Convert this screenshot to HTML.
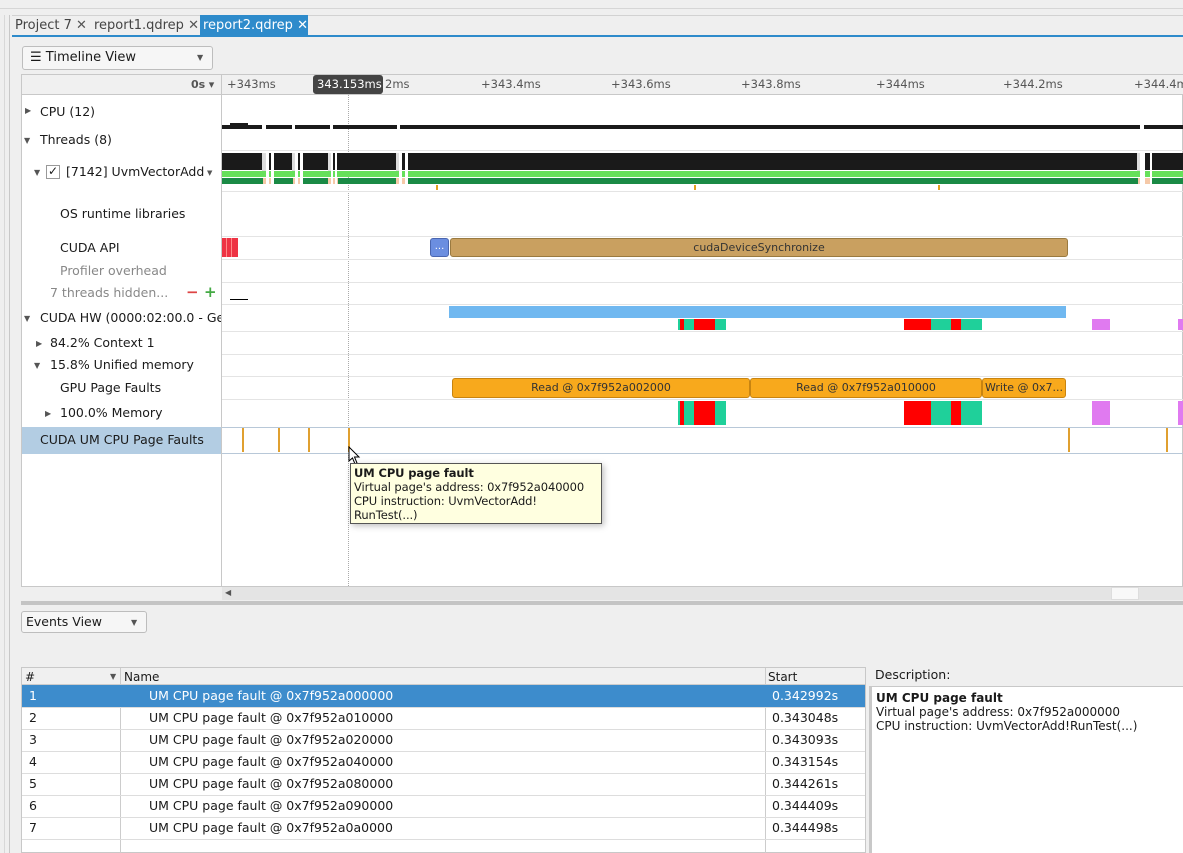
<!DOCTYPE html>
<html><head><meta charset="utf-8">
<style>
*{margin:0;padding:0;box-sizing:border-box}
body{width:1183px;height:853px;overflow:hidden;background:#efefef;font-family:"DejaVu Sans","Liberation Sans",sans-serif;font-size:12px;color:#1a1a1a;position:relative}
.a{position:absolute}
.t{position:absolute;white-space:nowrap}
.hl{position:absolute;left:222px;width:961px;height:1px;background:#e4e4e4}
.b{position:absolute}
.g{position:absolute;top:153px;height:31px;background:#fff}
.g2{position:absolute;top:153px;height:18px;background:#ddd}
</style></head><body>
<div class="a" style="left:0;top:8px;width:1183px;height:1px;background:#d6d6d6"></div>
<div class="a" style="left:9px;top:15px;width:1px;height:838px;background:#c8c8c8"></div>
<div class="a" style="left:4px;top:15px;width:1px;height:838px;background:#d8d8d8"></div>
<!-- tabs -->
<div class="a" style="left:12px;top:15px;width:1171px;height:1px;background:#d2d2d2"></div>
<div class="t" style="left:15px;top:18px;font-size:13px;color:#444">Project 7 <b style="color:#555">✕</b></div>
<div class="t" style="left:94px;top:18px;font-size:13px;color:#444">report1.qdrep <b style="color:#555">✕</b></div>
<div class="a" style="left:200px;top:15px;width:108px;height:20px;background:#2e8bcb"></div>
<div class="t" style="left:203px;top:18px;font-size:13px;color:#fff">report2.qdrep <b>✕</b></div>
<div class="a" style="left:12px;top:35px;width:1171px;height:2px;background:#2e8bcb"></div>
<!-- timeline view dropdown -->
<div class="a" style="left:22px;top:46px;width:191px;height:24px;background:#f6f6f6;border:1px solid #bdbdbd;border-radius:3px"></div>
<div class="t" style="left:30px;top:50px;font-size:13px">☰ Timeline View</div>
<div class="t" style="left:197px;top:53px;font-size:8px;color:#555">▼</div>
<!-- main panel -->
<div class="a" style="left:21px;top:74px;width:1162px;height:513px;background:#fff;border:1px solid #c8c8c8"></div>
<div class="a" style="left:22px;top:75px;width:1161px;height:20px;background:#f0f0f0;border-bottom:1px solid #c8c8c8"></div>
<div class="t" style="left:191px;top:78px;font-size:11px;color:#555"><b>0s</b> ▾</div>
<div class="a" style="left:221px;top:75px;width:1px;height:511px;background:#c8c8c8"></div>
<div class="t" style="left:227px;top:77px;font-size:11.5px;color:#555">+343ms</div>
<div class="t" style="left:385px;top:77px;font-size:11.5px;color:#555">2ms</div>
<div class="t" style="left:481px;top:77px;font-size:11.5px;color:#555">+343.4ms</div>
<div class="t" style="left:611px;top:77px;font-size:11.5px;color:#555">+343.6ms</div>
<div class="t" style="left:741px;top:77px;font-size:11.5px;color:#555">+343.8ms</div>
<div class="t" style="left:876px;top:77px;font-size:11.5px;color:#555">+344ms</div>
<div class="t" style="left:1003px;top:77px;font-size:11.5px;color:#555">+344.2ms</div>
<div class="t" style="left:1134px;top:77px;font-size:11.5px;color:#555">+344.4ms</div>
<div class="a" style="left:313px;top:75px;width:70px;height:19px;background:#444;border-radius:3px"></div>
<div class="t" style="left:317px;top:77px;font-size:11.5px;color:#fff">343.153ms</div>
<div class="a" style="left:348px;top:95px;width:0;height:491px;border-left:1px dotted #aaa"></div>
<!-- row separators -->
<div class="hl" style="top:128px"></div><div class="hl" style="top:150px"></div>
<div class="hl" style="top:191px"></div><div class="hl" style="top:236px"></div>
<div class="hl" style="top:259px"></div><div class="hl" style="top:282px"></div>
<div class="hl" style="top:304px"></div><div class="hl" style="top:331px"></div>
<div class="hl" style="top:354px"></div><div class="hl" style="top:376px"></div>
<div class="hl" style="top:399px"></div>
<div class="a" style="left:222px;top:427px;width:961px;height:1px;background:#b8c8d8"></div>
<div class="a" style="left:222px;top:453px;width:961px;height:1px;background:#b8c8d8"></div>
<!-- left tree -->
<div class="t" style="left:25px;top:106px;font-size:8px;color:#555">▶</div>
<div class="t" style="left:40px;top:104px;font-size:12.5px">CPU (12)</div>
<div class="t" style="left:24px;top:136px;font-size:8px;color:#555">▼</div>
<div class="t" style="left:40px;top:132px;font-size:12.5px">Threads (8)</div>
<div class="t" style="left:34px;top:168px;font-size:8px;color:#555">▼</div>
<div class="a" style="left:46px;top:165px;width:14px;height:14px;border:1px solid #999;background:#fff"></div>
<div class="t" style="left:48px;top:164px;font-size:12px">✓</div>
<div class="t" style="left:66px;top:164px;font-size:12.5px">[7142] UvmVectorAdd</div>
<div class="t" style="left:207px;top:169px;font-size:7px;color:#555">▼</div>
<div class="t" style="left:60px;top:206px;font-size:12.5px">OS runtime libraries</div>
<div class="t" style="left:60px;top:240px;font-size:12.5px">CUDA API</div>
<div class="t" style="left:60px;top:263px;font-size:12.5px;color:#888">Profiler overhead</div>
<div class="t" style="left:50px;top:285px;font-size:12.5px;color:#888">7 threads hidden...</div>
<div class="t" style="left:186px;top:283px;font-size:15px;color:#d44;font-weight:bold">−</div>
<div class="t" style="left:204px;top:283px;font-size:15px;color:#4a4;font-weight:bold">+</div>
<div class="t" style="left:24px;top:314px;font-size:8px;color:#555">▼</div>
<div class="a" style="left:40px;top:310px;width:181px;overflow:hidden;white-space:nowrap;font-size:12.5px">CUDA HW (0000:02:00.0 - GeForce</div>
<div class="t" style="left:36px;top:339px;font-size:8px;color:#555">▶</div>
<div class="t" style="left:50px;top:335px;font-size:12.5px">84.2% Context 1</div>
<div class="t" style="left:34px;top:361px;font-size:8px;color:#555">▼</div>
<div class="t" style="left:50px;top:357px;font-size:12.5px">15.8% Unified memory</div>
<div class="t" style="left:60px;top:380px;font-size:12.5px">GPU Page Faults</div>
<div class="t" style="left:45px;top:409px;font-size:8px;color:#555">▶</div>
<div class="t" style="left:60px;top:405px;font-size:12.5px">100.0% Memory</div>
<div class="a" style="left:22px;top:427px;width:199px;height:27px;background:#b3cde3"></div>
<div class="t" style="left:40px;top:432px;font-size:12.5px">CUDA UM CPU Page Faults</div>
<!-- CPU row -->
<div class="b" style="left:222px;top:125px;width:961px;height:4px;background:#1a1a1a"></div>
<div class="b" style="left:230px;top:123px;width:18px;height:3px;background:#1a1a1a"></div>
<div class="b" style="left:262px;top:125px;width:4px;height:4px;background:#fff"></div>
<div class="b" style="left:292px;top:125px;width:3px;height:4px;background:#fff"></div>
<div class="b" style="left:330px;top:125px;width:3px;height:4px;background:#fff"></div>
<div class="b" style="left:397px;top:125px;width:3px;height:4px;background:#fff"></div>
<div class="b" style="left:1140px;top:125px;width:4px;height:4px;background:#fff"></div>
<!-- thread row -->
<div class="b" style="left:222px;top:153px;width:961px;height:17px;background:#1a1a1a"></div>
<div class="b" style="left:222px;top:171px;width:961px;height:6px;background:#66e05a"></div>
<div class="b" style="left:222px;top:178px;width:961px;height:6px;background:#1a8a45"></div>
<div class="b" style="left:263px;top:178px;width:11px;height:6px;background:#f5c9a8"></div>
<div class="b" style="left:293px;top:178px;width:10px;height:6px;background:#f5c9a8"></div>
<div class="b" style="left:328px;top:178px;width:10px;height:6px;background:#f5c9a8"></div>
<div class="b" style="left:396px;top:178px;width:12px;height:6px;background:#f5c9a8"></div>
<div class="b" style="left:1138px;top:178px;width:14px;height:6px;background:#f5c9a8"></div>
<div class="g2" style="left:262px;width:4px"></div><div class="g" style="left:266px;width:3px"></div><div class="g" style="left:271px;width:3px"></div>
<div class="g2" style="left:292px;width:3px"></div><div class="g" style="left:295px;width:3px"></div><div class="g" style="left:300px;width:3px"></div>
<div class="g2" style="left:328px;width:3px"></div><div class="g" style="left:331px;width:2px"></div><div class="g" style="left:335px;width:2px"></div>
<div class="g2" style="left:396px;width:3px"></div><div class="g" style="left:399px;width:3px"></div><div class="g" style="left:405px;width:3px"></div>
<div class="g2" style="left:1137px;width:3px"></div><div class="g" style="left:1140px;width:5px"></div><div class="g" style="left:1150px;width:2px"></div>
<div class="b" style="left:436px;top:185px;width:2px;height:5px;background:#e0a020"></div>
<div class="b" style="left:694px;top:185px;width:2px;height:5px;background:#e0a020"></div>
<div class="b" style="left:938px;top:185px;width:2px;height:5px;background:#e0a020"></div>
<!-- CUDA API -->
<div class="b" style="left:222px;top:238px;width:16px;height:19px;background:#ee3344"></div>
<div class="b" style="left:226px;top:238px;width:1px;height:19px;background:#f88"></div>
<div class="b" style="left:231px;top:238px;width:1px;height:19px;background:#f88"></div>
<div class="b" style="left:430px;top:238px;width:19px;height:19px;background:#6b8ee0;border:1px solid #4a66b0;border-radius:3px;color:#fff;font-size:10px;text-align:center;line-height:15px">...</div>
<div class="b" style="left:450px;top:238px;width:618px;height:19px;background:#c9a060;border:1px solid #9a7a40;border-radius:3px;font-size:11px;text-align:center;line-height:17px;color:#333">cudaDeviceSynchronize</div>
<div class="b" style="left:230px;top:299px;width:18px;height:1px;background:#000"></div>
<!-- CUDA HW -->
<div class="b" style="left:449px;top:306px;width:617px;height:12px;background:#70b8f0"></div>
<div class="b" style="left:678px;top:319px;width:48px;height:11px;background:#1fd09a"></div>
<div class="b" style="left:694px;top:319px;width:21px;height:11px;background:#f00"></div>
<div class="b" style="left:680px;top:319px;width:4px;height:11px;background:#f00"></div>
<div class="b" style="left:904px;top:319px;width:78px;height:11px;background:#1fd09a"></div>
<div class="b" style="left:904px;top:319px;width:27px;height:11px;background:#f00"></div>
<div class="b" style="left:951px;top:319px;width:10px;height:11px;background:#f00"></div>
<div class="b" style="left:1092px;top:319px;width:18px;height:11px;background:#e07af0"></div>
<div class="b" style="left:1178px;top:319px;width:5px;height:11px;background:#e07af0"></div>
<!-- GPU page faults -->
<div class="b" style="left:452px;top:378px;width:298px;height:20px;background:#f8a91c;border:1px solid #c88410;border-radius:3px;font-size:11px;text-align:center;line-height:18px;color:#333">Read @ 0x7f952a002000</div>
<div class="b" style="left:750px;top:378px;width:232px;height:20px;background:#f8a91c;border:1px solid #c88410;border-radius:3px;font-size:11px;text-align:center;line-height:18px;color:#333">Read @ 0x7f952a010000</div>
<div class="b" style="left:982px;top:378px;width:84px;height:20px;background:#f8a91c;border:1px solid #c88410;border-radius:3px;font-size:11px;line-height:18px;color:#333;padding-left:2px;overflow:hidden;white-space:nowrap">Write @ 0x7...</div>
<!-- memory -->
<div class="b" style="left:678px;top:401px;width:48px;height:24px;background:#1fd09a"></div>
<div class="b" style="left:694px;top:401px;width:21px;height:24px;background:#f00"></div>
<div class="b" style="left:680px;top:401px;width:4px;height:24px;background:#f00"></div>
<div class="b" style="left:904px;top:401px;width:78px;height:24px;background:#1fd09a"></div>
<div class="b" style="left:904px;top:401px;width:27px;height:24px;background:#f00"></div>
<div class="b" style="left:951px;top:401px;width:10px;height:24px;background:#f00"></div>
<div class="b" style="left:1092px;top:401px;width:18px;height:24px;background:#e07af0"></div>
<div class="b" style="left:1178px;top:401px;width:5px;height:24px;background:#e07af0"></div>
<!-- UM faults -->
<div class="b" style="left:242px;top:428px;width:2px;height:24px;background:#e0a030"></div>
<div class="b" style="left:278px;top:428px;width:2px;height:24px;background:#e0a030"></div>
<div class="b" style="left:308px;top:428px;width:2px;height:24px;background:#e0a030"></div>
<div class="b" style="left:348px;top:428px;width:2px;height:24px;background:#e0a030"></div>
<div class="b" style="left:1068px;top:428px;width:2px;height:24px;background:#e0a030"></div>
<div class="b" style="left:1166px;top:428px;width:2px;height:24px;background:#e0a030"></div>
<svg class="a" style="left:348px;top:446px" width="14" height="20"><path d="M1 1 L1 15 L4.5 12 L7 18 L9 17 L6.5 11 L11 11 Z" fill="#fff" stroke="#000" stroke-width="1"/></svg>
<!-- tooltip -->
<div class="a" style="left:350px;top:463px;width:252px;height:61px;background:#ffffe0;border:1px solid #555;box-shadow:2px 2px 6px rgba(0,0,0,.25);padding:2px 3px;font-size:11.5px;line-height:14px;white-space:nowrap;overflow:hidden;letter-spacing:-0.1px">
<b>UM CPU page fault</b><br>Virtual page's address: 0x7f952a040000<br>CPU instruction: UvmVectorAdd!<br>RunTest(...)</div>
<!-- scrollbar -->
<div class="a" style="left:222px;top:587px;width:961px;height:13px;background:#e4e4e4"></div>
<div class="t" style="left:225px;top:588px;font-size:8px;color:#555">◀</div>
<div class="a" style="left:1111px;top:587px;width:28px;height:13px;background:#f8f8f8;border:1px solid #ddd"></div>
<div class="a" style="left:21px;top:601px;width:1162px;height:4px;background:#c4c4c4"></div>
<!-- events dropdown -->
<div class="a" style="left:21px;top:611px;width:126px;height:22px;background:#f6f6f6;border:1px solid #bdbdbd;border-radius:3px"></div>
<div class="t" style="left:26px;top:614px;font-size:12.5px">Events View</div>
<div class="t" style="left:131px;top:618px;font-size:8px;color:#555">▼</div>
<!-- table -->
<div class="a" style="left:21px;top:667px;width:845px;height:186px;background:#fff;border:1px solid #c8c8c8"></div>
<div class="a" style="left:22px;top:668px;width:843px;height:17px;background:#f0f0f0;border-bottom:1px solid #ccc"></div>
<div class="t" style="left:25px;top:670px">#</div>
<div class="t" style="left:110px;top:672px;font-size:8px;color:#555">▼</div>
<div class="a" style="left:120px;top:668px;width:1px;height:185px;background:#ccc"></div>
<div class="t" style="left:124px;top:670px">Name</div>
<div class="a" style="left:765px;top:668px;width:1px;height:185px;background:#ccc"></div>
<div class="t" style="left:768px;top:670px">Start</div>
<div class="a" style="left:22px;top:685px;width:843px;height:22px;background:#3d8ccc"></div>
<div class="t" style="left:29px;top:688px;color:#fff;font-size:12.5px">1</div><div class="t" style="left:149px;top:688px;color:#fff;font-size:12.5px">UM CPU page fault @ 0x7f952a000000</div><div class="t" style="left:772px;top:688px;color:#fff;font-size:12.5px">0.342992s</div>
<div class="a" style="left:22px;top:729px;width:843px;height:1px;background:#ddd"></div>
<div class="t" style="left:29px;top:710px;font-size:12.5px">2</div><div class="t" style="left:149px;top:710px;font-size:12.5px">UM CPU page fault @ 0x7f952a010000</div><div class="t" style="left:772px;top:710px;font-size:12.5px">0.343048s</div>
<div class="a" style="left:22px;top:751px;width:843px;height:1px;background:#ddd"></div>
<div class="t" style="left:29px;top:732px;font-size:12.5px">3</div><div class="t" style="left:149px;top:732px;font-size:12.5px">UM CPU page fault @ 0x7f952a020000</div><div class="t" style="left:772px;top:732px;font-size:12.5px">0.343093s</div>
<div class="a" style="left:22px;top:773px;width:843px;height:1px;background:#ddd"></div>
<div class="t" style="left:29px;top:754px;font-size:12.5px">4</div><div class="t" style="left:149px;top:754px;font-size:12.5px">UM CPU page fault @ 0x7f952a040000</div><div class="t" style="left:772px;top:754px;font-size:12.5px">0.343154s</div>
<div class="a" style="left:22px;top:795px;width:843px;height:1px;background:#ddd"></div>
<div class="t" style="left:29px;top:776px;font-size:12.5px">5</div><div class="t" style="left:149px;top:776px;font-size:12.5px">UM CPU page fault @ 0x7f952a080000</div><div class="t" style="left:772px;top:776px;font-size:12.5px">0.344261s</div>
<div class="a" style="left:22px;top:817px;width:843px;height:1px;background:#ddd"></div>
<div class="t" style="left:29px;top:798px;font-size:12.5px">6</div><div class="t" style="left:149px;top:798px;font-size:12.5px">UM CPU page fault @ 0x7f952a090000</div><div class="t" style="left:772px;top:798px;font-size:12.5px">0.344409s</div>
<div class="a" style="left:22px;top:839px;width:843px;height:1px;background:#ddd"></div>
<div class="t" style="left:29px;top:820px;font-size:12.5px">7</div><div class="t" style="left:149px;top:820px;font-size:12.5px">UM CPU page fault @ 0x7f952a0a0000</div><div class="t" style="left:772px;top:820px;font-size:12.5px">0.344498s</div>
<div class="a" style="left:22px;top:707px;width:843px;height:1px;background:#ddd"></div>
<!-- description -->
<div class="t" style="left:875px;top:667px;font-size:12.5px">Description:</div>
<div class="a" style="left:869px;top:686px;width:314px;height:167px;background:#fff;border-left:3px solid #c8c8c8;border-top:1px solid #c8c8c8"></div>
<div class="a" style="left:876px;top:691px;font-size:12px;line-height:14px;white-space:nowrap"><b>UM CPU page fault</b><br>Virtual page's address: 0x7f952a000000<br>CPU instruction: UvmVectorAdd!RunTest(...)</div>
</body></html>
